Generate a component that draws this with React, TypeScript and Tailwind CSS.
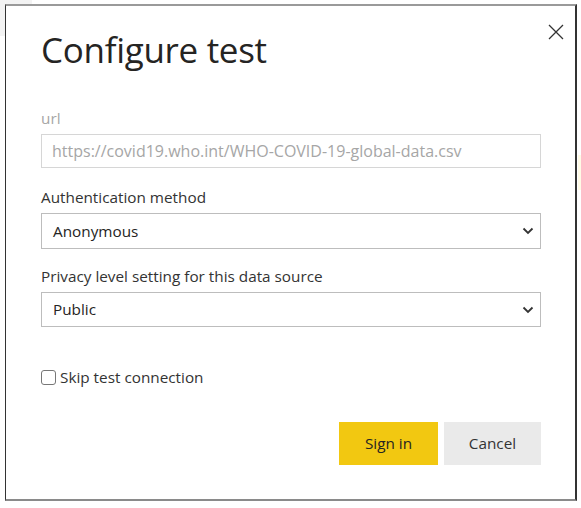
import React from "react";

export default function App() {
  const font = { fontFamily: '"Open Sans", "Noto Sans", sans-serif' };
  return (
    <div className="relative w-[581px] h-[508px] bg-white overflow-hidden" style={font}>
      <div className="absolute left-0 top-0 w-[32px] h-[36px] bg-[#f3f3f3]" />
      <div className="absolute left-[578px] top-[155px] w-[3px] h-[35px] bg-[#fffbe6]" />
      <div className="absolute left-[5px] top-[4px] w-[572px] h-[497px] bg-white border-l border-r-2 border-l-[#333] border-r-[#333] border-t-2 border-b-2 border-t-[#9a9a9a] border-b-[#8a8a8a] flex flex-col pl-[35px] pr-[34px]">
        <button className="absolute right-[10px] top-[17px] w-[18px] h-[18px] flex items-center justify-center text-[#333]">
          <svg width="16" height="16" viewBox="0 0 16 16">
            <path d="M1 1 L15 15 M15 1 L1 15" stroke="#333" strokeWidth="1.3" fill="none" />
          </svg>
        </button>
        <h1 className="mt-[20px] text-[35px] leading-[48px] text-[#252423] tracking-[-0.3px]">Configure test</h1>
        <label className="mt-[34px] text-[15.3px] leading-[20px] text-[#a6a6a6]">url</label>
        <div className="mt-[6px] h-[34px] border border-[#d6d6d6] flex items-center px-[10px] text-[16px] text-[#a6a6a6] whitespace-nowrap">
          https://covid19.who.int/WHO-COVID-19-global-data.csv
        </div>
        <label className="mt-[19px] text-[15.3px] leading-[20px] text-[#333]">Authentication method</label>
        <div className="mt-[6px] h-[36px] border border-[#bdbdbd] flex items-center justify-between pl-[11px] pr-[6px] text-[15.3px] text-[#252423]">
          <span>Anonymous</span>
          <svg width="12" height="8" viewBox="0 0 12 8">
            <path d="M1.5 1.5 L6 6 L10.5 1.5" stroke="#333" strokeWidth="1.8" fill="none" />
          </svg>
        </div>
        <label className="mt-[17px] text-[15.3px] leading-[20px] text-[#333]">Privacy level setting for this data source</label>
        <div className="mt-[6px] h-[35px] border border-[#bdbdbd] flex items-center justify-between pl-[11px] pr-[6px] text-[15.3px] text-[#252423]">
          <span>Public</span>
          <svg width="12" height="8" viewBox="0 0 12 8">
            <path d="M1.5 1.5 L6 6 L10.5 1.5" stroke="#333" strokeWidth="1.8" fill="none" />
          </svg>
        </div>
        <div className="mt-[40px] flex items-center gap-[4px]">
          <span className="w-[15px] h-[15px] border border-[#777] rounded-[3px] bg-white" />
          <span className="text-[15.3px] leading-[20px] text-[#333]">Skip test connection</span>
        </div>
        <div className="mt-[35px] flex justify-end gap-[6px]">
          <button className="w-[99px] h-[43px] bg-[#f2c811] text-[15.3px] text-[#252423]">Sign in</button>
          <button className="w-[97px] h-[43px] bg-[#eaeaea] text-[15.3px] text-[#333]">Cancel</button>
        </div>
      </div>
    </div>
  );
}
